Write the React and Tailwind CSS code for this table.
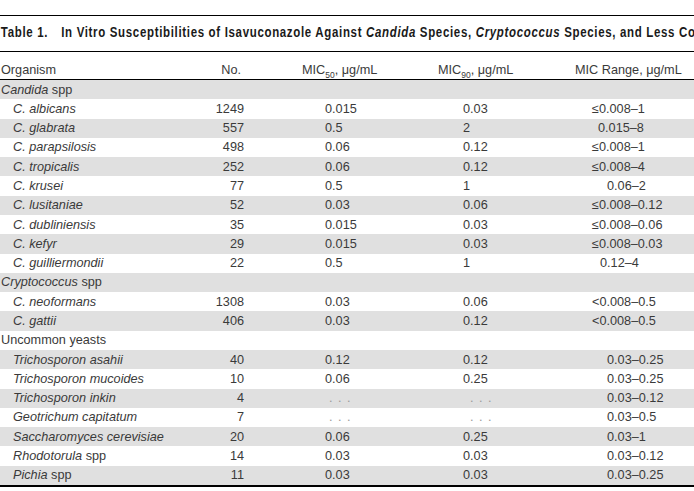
import React from "react";

const rows = [
  { g: true, label: <><i>Candida</i> spp</> },
  { n: "C. albicans", no: "1249", a: "0.015", b: "0.03", r: "≤0.008–1", rp: "pl-[22px]" },
  { n: "C. glabrata", no: "557", a: "0.5", b: "2", r: "0.015–8", rp: "pl-[28px]" },
  { n: "C. parapsilosis", no: "498", a: "0.06", b: "0.12", r: "≤0.008–1", rp: "pl-[22px]" },
  { n: "C. tropicalis", no: "252", a: "0.06", b: "0.12", r: "≤0.008–4", rp: "pl-[22px]" },
  { n: "C. krusei", no: "77", a: "0.5", b: "1", r: "0.06–2", rp: "pl-[37px]" },
  { n: "C. lusitaniae", no: "52", a: "0.03", b: "0.06", r: "≤0.008–0.12", rp: "pl-[22px]" },
  { n: "C. dubliniensis", no: "35", a: "0.015", b: "0.03", r: "≤0.008–0.06", rp: "pl-[22px]" },
  { n: "C. kefyr", no: "29", a: "0.015", b: "0.03", r: "≤0.008–0.03", rp: "pl-[22px]" },
  { n: "C. guilliermondii", no: "22", a: "0.5", b: "1", r: "0.12–4", rp: "pl-[30px]" },
  { g: true, label: <><i>Cryptococcus</i> spp</> },
  { n: "C. neoformans", no: "1308", a: "0.03", b: "0.06", r: "<0.008–0.5", rp: "pl-[22px]" },
  { n: "C. gattii", no: "406", a: "0.03", b: "0.12", r: "<0.008–0.5", rp: "pl-[22px]" },
  { g: true, label: <>Uncommon yeasts</> },
  { n: "Trichosporon asahii", no: "40", a: "0.12", b: "0.12", r: "0.03–0.25", rp: "pl-[37px]" },
  { n: "Trichosporon mucoides", no: "10", a: "0.06", b: "0.25", r: "0.03–0.25", rp: "pl-[37px]" },
  { n: "Trichosporon inkin", no: "4", a: null, b: null, r: "0.03–0.12", rp: "pl-[37px]" },
  { n: "Geotrichum capitatum", no: "7", a: null, b: null, r: "0.03–0.5", rp: "pl-[37px]" },
  { n: "Saccharomyces cerevisiae", no: "20", a: "0.06", b: "0.25", r: "0.03–1", rp: "pl-[37px]" },
  { n: <><i>Rhodotorula</i> spp</>, no: "14", a: "0.03", b: "0.03", r: "0.03–0.12", rp: "pl-[37px]", plain: true },
  { n: <><i>Pichia</i> spp</>, no: "11", a: "0.03", b: "0.03", r: "0.03–0.25", rp: "pl-[37px]", plain: true },
];

const grid = "grid grid-cols-[200px_45px_175px_150px_1fr] items-center";

export default function App() {
  return (
    <div
      className="w-[694px] h-[491px] overflow-hidden bg-white text-[#3a3a3a]"
      style={{ fontFamily: '"Liberation Sans", Arial, sans-serif' }}
    >
      <div className="mt-[15px] border-t border-black">
        <div className="h-[36px] pt-[9px] leading-[14px] text-[14px] font-bold text-[#1a1a1a] whitespace-nowrap overflow-hidden border-b border-black">
          <span className="inline-block origin-left scale-x-[0.82] pl-[1px] tracking-[0.82px]">
            <span className="mr-[16px]">Table 1.</span>
            In Vitro Susceptibilities of Isavuconazole Against <i>Candida</i> Species,{" "}
            <i>Cryptococcus</i> Species, and Less Common Yeasts
          </span>
        </div>
        <div className={`${grid} h-[28px] pt-[10px] pb-[2px] leading-[16px] text-[12.7px] border-b border-black`}>
          <div className="pl-[1px]">Organism</div>
          <div className="text-right pr-[4px]">No.</div>
          <div className="pl-[57px] whitespace-nowrap">
            MIC<sub className="text-[8.5px] align-[-2px]">50</sub>, μg/mL
          </div>
          <div className="pl-[18px] whitespace-nowrap">
            MIC<sub className="text-[8.5px] align-[-2px]">90</sub>, μg/mL
          </div>
          <div className="pl-[5px] whitespace-nowrap">MIC Range, μg/mL</div>
        </div>
        <div className="border-b-2 border-black">
          {rows.map((r, i) => (
            <div
              key={i}
              className={`${grid} h-[19.29px] text-[12.7px] leading-[16px] whitespace-nowrap ${i % 2 === 0 ? "bg-[#e0e0e0]" : "bg-white"}`}
            >
              {r.g ? (
                <div className="pl-[1px] col-span-5">{r.label}</div>
              ) : (
                <>
                  <div className={`pl-[13px] ${r.plain ? "" : "italic"}`}>{r.n}</div>
                  <div className="text-right pr-[1px]">{r.no}</div>
                  <div className={r.a ? "pl-[80px]" : "pl-[84px] text-[#9a9a9a] tracking-[1px]"}>
                    {r.a ?? ". . ."}
                  </div>
                  <div className={r.b ? "pl-[43px]" : "pl-[50px] text-[#9a9a9a] tracking-[1px]"}>
                    {r.b ?? ". . ."}
                  </div>
                  <div className={r.rp}>{r.r}</div>
                </>
              )}
            </div>
          ))}
        </div>
      </div>
    </div>
  );
}
